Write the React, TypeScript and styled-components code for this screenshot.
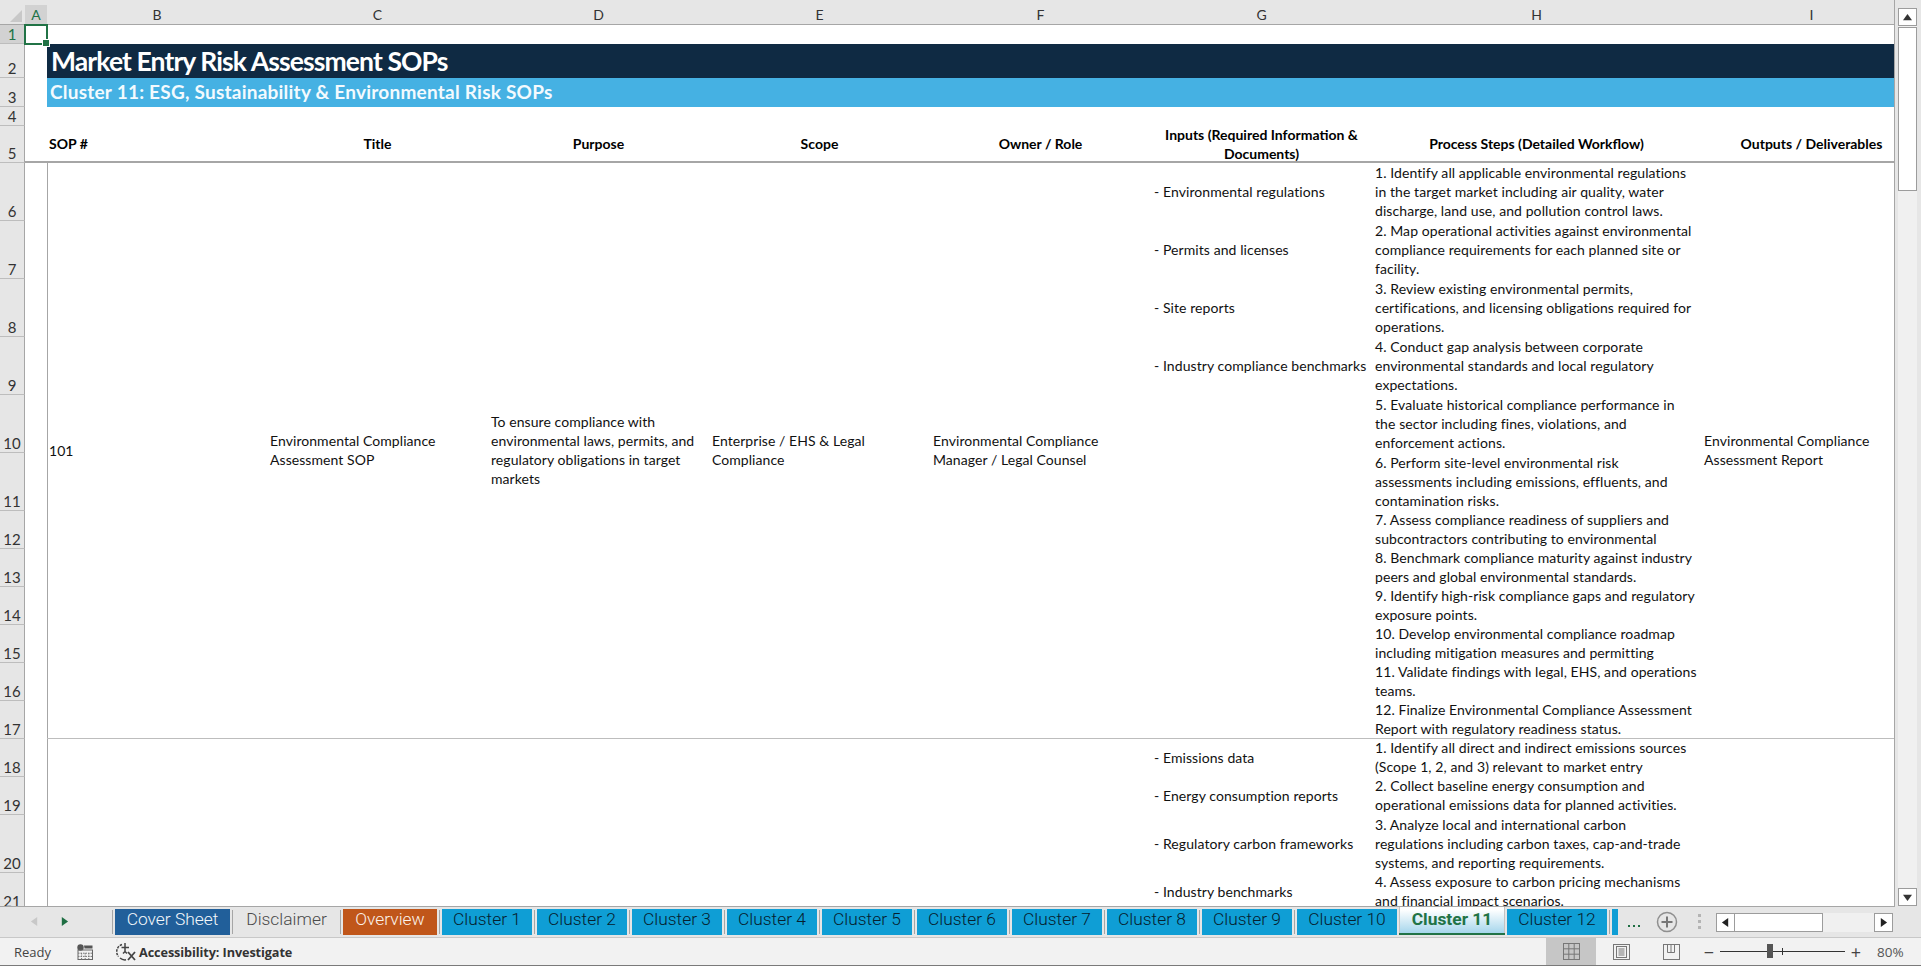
import React from "react";
import styled, { createGlobalStyle } from "styled-components";

const GlobalStyle = createGlobalStyle`
  html, body {
    margin: 0;
    padding: 0;
    background: #e6e6e6;
    overflow: hidden;
  }
  * {
    box-sizing: border-box;
  }
`;

const ROW_HEIGHTS = [25, 19, 34, 29, 19, 37, 58, 58, 58, 58, 58, 58, 38, 38, 38, 38, 38, 38, 38, 38, 58, 38];
const COL_WIDTHS = [25, 22, 220, 221, 221, 221, 221, 221, 329, 221];
const COL_LETTERS = ["A", "B", "C", "D", "E", "F", "G", "H", "I"];

const HEADERS = [
  "Title",
  "Purpose",
  "Scope",
  "Owner / Role",
  "Inputs (Required Information &\nDocuments)",
  "Process Steps (Detailed Workflow)",
  "Outputs / Deliverables",
];

const MERGED = [
  { col: 4, text: "Environmental Compliance\nAssessment SOP" },
  { col: 5, text: "To ensure compliance with\nenvironmental laws, permits, and\nregulatory obligations in target\nmarkets" },
  { col: 6, text: "Enterprise / EHS & Legal\nCompliance" },
  { col: 7, text: "Environmental Compliance\nManager / Legal Counsel" },
  { col: 10, text: "Environmental Compliance\nAssessment Report" },
];

const INPUTS: Record<number, string> = {
  6: "- Environmental regulations",
  7: "- Permits and licenses",
  8: "- Site reports",
  9: "- Industry compliance benchmarks",
  18: "- Emissions data",
  19: "- Energy consumption reports",
  20: "- Regulatory carbon frameworks",
  21: "- Industry benchmarks",
};

const STEPS: Record<number, string> = {
  6: "1. Identify all applicable environmental regulations\nin the target market including air quality, water\ndischarge, land use, and pollution control laws.",
  7: "2. Map operational activities against environmental\ncompliance requirements for each planned site or\nfacility.",
  8: "3. Review existing environmental permits,\ncertifications, and licensing obligations required for\noperations.",
  9: "4. Conduct gap analysis between corporate\nenvironmental standards and local regulatory\nexpectations.",
  10: "5. Evaluate historical compliance performance in\nthe sector including fines, violations, and\nenforcement actions.",
  11: "6. Perform site-level environmental risk\nassessments including emissions, effluents, and\ncontamination risks.",
  12: "7. Assess compliance readiness of suppliers and\nsubcontractors contributing to environmental",
  13: "8. Benchmark compliance maturity against industry\npeers and global environmental standards.",
  14: "9. Identify high-risk compliance gaps and regulatory\nexposure points.",
  15: "10. Develop environmental compliance roadmap\nincluding mitigation measures and permitting",
  16: "11. Validate findings with legal, EHS, and operations\nteams.",
  17: "12. Finalize Environmental Compliance Assessment\nReport with regulatory readiness status.",
  18: "1. Identify all direct and indirect emissions sources\n(Scope 1, 2, and 3) relevant to market entry",
  19: "2. Collect baseline energy consumption and\noperational emissions data for planned activities.",
  20: "3. Analyze local and international carbon\nregulations including carbon taxes, cap-and-trade\nsystems, and reporting requirements.",
  21: "4. Assess exposure to carbon pricing mechanisms\nand financial impact scenarios.",
};

const TABS = [
  { name: "Cover Sheet", width: 115, kind: "cover" },
  { name: "Disclaimer", width: 103, kind: "plain" },
  { name: "Overview", width: 94, kind: "overview" },
  ...[1, 2, 3, 4, 5, 6, 7, 8, 9].map((n) => ({ name: `Cluster ${n}`, width: 90, kind: "cluster" })),
  { name: "Cluster 10", width: 100, kind: "cluster" },
  { name: "Cluster 11", width: 106, kind: "active" },
  { name: "Cluster 12", width: 100, kind: "cluster" },
  { name: "", width: 6, kind: "cluster" },
];

const TAB_COLORS: Record<string, { bg: string; fg: string }> = {
  cover: { bg: "#215f9a", fg: "#f4f8fb" },
  plain: { bg: "transparent", fg: "#4a4a4a" },
  overview: { bg: "#c0561a", fg: "#fbf3ec" },
  cluster: { bg: "#0f9ed5", fg: "#06202e" },
};

const CELL_FONT = `"Lato", "Liberation Sans", sans-serif`;
const UI_FONT = `"Open Sans", "Liberation Sans", sans-serif`;

const Window = styled.div`
  width: 1921px;
  height: 966px;
  display: flex;
  flex-direction: column;
  overflow: hidden;
  background: #e6e6e6;
`;

const SheetRow = styled.div`
  display: flex;
  height: 907px;
`;

const SheetViewport = styled.div`
  width: 1895px;
  height: 907px;
  overflow: hidden;
  background: #fff;
  border-right: 1px solid #a6a6a6;
  border-bottom: 1px solid #a6a6a6;
`;

const Grid = styled.div`
  display: grid;
  width: 1922px;
  grid-template-columns: ${COL_WIDTHS.map((w) => `${w}px`).join(" ")};
  grid-template-rows: ${ROW_HEIGHTS.map((h) => `${h}px`).join(" ")};
  font-family: ${CELL_FONT};
  font-size: 14px;
  line-height: 19px;
  color: #111;
`;

const Corner = styled.div`
  grid-row: 1;
  grid-column: 1;
  background: #e6e6e6;
  border-bottom: 1px solid #a6a6a6;
  display: flex;
  padding: 10px 0 0 10px;
`;

const ColHead = styled.div<{ $col: number }>`
  grid-row: 1;
  grid-column: ${(p) => p.$col};
  background: #e6e6e6;
  border-bottom: 1px solid #a6a6a6;
  display: flex;
  align-items: flex-end;
`;

const ColLabel = styled.div<{ $active?: boolean }>`
  flex: 1;
  height: 19px;
  margin-right: -1px;
  text-align: center;
  line-height: 19px;
  font-size: 14px;
  border-right: 1px solid #b4b4b4;
  background: ${(p) => (p.$active ? "#d2d2d2" : "transparent")};
  color: ${(p) => (p.$active ? "#217346" : "#333")};
`;

const RowHead = styled.div<{ $row: number; $active?: boolean }>`
  grid-row: ${(p) => p.$row};
  grid-column: 1;
  display: flex;
  align-items: flex-end;
  justify-content: center;
  background: ${(p) => (p.$active ? "#d2d2d2" : "#e6e6e6")};
  color: ${(p) => (p.$active ? "#217346" : "#333")};
  border-right: 1px solid #a6a6a6;
  border-bottom: 1px solid #bdbdbd;
  font-size: 15px;
  line-height: 17px;
`;

const Selection = styled.div`
  grid-row: 2;
  grid-column: 2;
  position: relative;
  z-index: 2;
  margin: -1px -1px -1px -1px;
  border: 2px solid #217346;

  &::after {
    content: "";
    position: absolute;
    right: -4px;
    bottom: -4px;
    width: 6px;
    height: 6px;
    background: #217346;
    border: 1px solid #fff;
  }
`;

const TitleBar = styled.div`
  grid-row: 3;
  grid-column: 3 / 11;
  background: #0f2a43;
  color: #fff;
  font-size: 26.5px;
  font-weight: 700;
  line-height: 35px;
  padding-left: 4px;
  white-space: nowrap;
  letter-spacing: -0.9px;
`;

const SubtitleBar = styled.div`
  grid-row: 4;
  grid-column: 3 / 11;
  background: #45b1e3;
  color: #f3fafe;
  font-size: 19px;
  font-weight: 700;
  line-height: 27px;
  padding-left: 3px;
  white-space: nowrap;
  letter-spacing: 0.23px;
`;

const HeaderCell = styled.div<{ $col: number; $left?: boolean }>`
  grid-row: 6;
  grid-column: ${(p) => p.$col};
  display: flex;
  align-items: center;
  justify-content: ${(p) => (p.$left ? "flex-start" : "center")};
  text-align: ${(p) => (p.$left ? "left" : "center")};
  padding: 0 2px;
  font-weight: 700;
  white-space: pre-line;
  color: #000;
  border-bottom: 2px solid #a6a6a6;
`;

const AGutter = styled.div`
  grid-row: 6;
  grid-column: 2;
  border-bottom: 2px solid #a6a6a6;
`;

const MergedCell = styled.div<{ $col: number; $from: number; $to: number }>`
  grid-column: ${(p) => p.$col};
  grid-row: ${(p) => p.$from} / ${(p) => p.$to};
  display: flex;
  align-items: center;
  padding: 0 3px 2px ${(p) => (p.$col === 3 ? 1 : 3)}px;
  white-space: pre-line;
  letter-spacing: 0.06px;
  border-left: ${(p) => (p.$col === 3 ? "1px solid #a6a6a6" : "none")};
`;

const BlockLine = styled.div`
  grid-row: 18;
  grid-column: 3 / 11;
  align-self: end;
  height: 1px;
  background: #bdbdbd;
`;

const RowCell = styled.div<{ $col: number; $row: number }>`
  grid-column: ${(p) => p.$col};
  grid-row: ${(p) => p.$row};
  display: flex;
  align-items: center;
  padding: 0 3px 2px;
  white-space: pre;
  letter-spacing: 0.08px;
`;

const VScroll = styled.div`
  width: 26px;
  height: 906px;
  display: flex;
  flex-direction: column;
  padding: 8px 4px 0 3px;
`;

const ScrollButton = styled.div`
  width: 19px;
  height: 18px;
  background: #fff;
  border: 1px solid #9c9c9c;
  display: flex;
  align-items: center;
  justify-content: center;
`;

const VTrack = styled.div`
  flex: 1;
  width: 19px;
  background: #f0f0f0;
  display: flex;
  flex-direction: column;
`;

const VThumb = styled.div`
  height: 164px;
  margin-top: 1px;
  background: #fff;
  border: 1px solid #9c9c9c;
`;

const TabBar = styled.div`
  height: 31px;
  display: flex;
  align-items: flex-start;
  padding-top: 2px;
  background: #e6e6e6;
  border-bottom: 1px solid #c8c8c8;
`;

const TabNav = styled.div`
  width: 112px;
  height: 24px;
  display: flex;
  align-items: center;
  gap: 21px;
  padding-left: 30px;
`;

const TabStrip = styled.div`
  display: flex;
  align-items: flex-start;
  gap: 2px;
  font-family: "Roboto", "Liberation Sans", sans-serif;
  font-size: 17.4px;
  font-weight: 300;
`;

const TabSep = styled.div`
  width: 1px;
  height: 24px;
  margin-top: 1px;
  background: #a6a6a6;
`;

const Tab = styled.div<{ $width: number; $kind: string }>`
  width: ${(p) => p.$width}px;
  height: 26px;
  line-height: 21px;
  text-align: center;
  white-space: nowrap;
  overflow: hidden;
  background: ${(p) => TAB_COLORS[p.$kind].bg};
  color: ${(p) => TAB_COLORS[p.$kind].fg};
`;

const ActiveTab = styled.div<{ $width: number }>`
  width: ${(p) => p.$width}px;
  height: 28px;
  margin-top: -2px;
  line-height: 25px;
  text-align: center;
  white-space: nowrap;
  font-weight: 700;
  color: #217346;
  background: linear-gradient(#ffffff 10%, #a6d6ec);
  border-bottom: 2px solid #217346;
  box-shadow: inset 1px 0 0 #c4c4c4, inset -1px 0 0 #c4c4c4;
`;

const MoreDots = styled.div`
  margin-left: 10px;
  width: 12px;
  height: 26px;
  display: flex;
  justify-content: space-between;
  align-items: flex-end;
  padding-bottom: 8px;
`;

const GreenDot = styled.span`
  width: 2px;
  height: 2px;
  background: #1f6e43;
`;

const AddSheet = styled.div`
  margin-left: 16px;
  height: 26px;
  display: flex;
  align-items: center;
`;

const SplitGrip = styled.div`
  margin-left: 20px;
  height: 26px;
  width: 4px;
  padding-top: 5px;
  display: flex;
  flex-direction: column;
  gap: 3px;
`;

const GripDot = styled.span`
  width: 3px;
  height: 3px;
  background: #b4b4b4;
`;

const HScroll = styled.div`
  margin-left: 14px;
  margin-top: 4px;
  width: 177px;
  height: 19px;
  display: flex;
`;

const HButton = styled.div`
  width: 19px;
  height: 19px;
  background: #fff;
  border: 1px solid #9c9c9c;
  display: flex;
  align-items: center;
  justify-content: center;
`;

const HThumb = styled.div`
  width: 88px;
  height: 19px;
  background: #fff;
  border: 1px solid #9c9c9c;
  border-left: none;
`;

const HTrack = styled.div`
  flex: 1;
  background: #f0f0f0;
`;

const StatusBar = styled.div`
  height: 28px;
  display: flex;
  align-items: center;
  background: #f2f2f2;
  border-bottom: 1px solid #7a7a7a;
  font-family: ${UI_FONT};
  font-size: 13px;
  color: #444;
`;

const ReadyText = styled.span`
  margin-left: 14px;
  width: 63px;
`;

const IconSlot = styled.span<{ $margin?: number }>`
  display: inline-flex;
  margin-left: ${(p) => p.$margin ?? 0}px;
`;

const AccessText = styled.span`
  margin-left: 3px;
  font-size: 12.7px;
  font-weight: 700;
  color: #333;
  letter-spacing: -0.1px;
`;

const StatusRight = styled.div`
  margin-left: auto;
  display: flex;
  align-items: center;
  height: 100%;
`;

const ViewButton = styled.div<{ $active?: boolean }>`
  width: 50px;
  height: 100%;
  display: flex;
  align-items: center;
  justify-content: center;
  background: ${(p) => (p.$active ? "#c6c6c6" : "transparent")};
`;

const ZoomStrip = styled.div`
  margin-left: 7px;
  display: flex;
  align-items: center;
`;

const ZoomGlyph = styled.span`
  font-size: 18px;
  line-height: 18px;
  color: #444;
  width: 12px;
  text-align: center;
`;

const ZoomSlider = styled.div`
  position: relative;
  width: 125px;
  height: 1px;
  margin: 0 5px;
  background: #333;
`;

const ZoomThumb = styled.span`
  position: absolute;
  left: 47px;
  top: -7px;
  width: 6px;
  height: 14px;
  background: #555;
`;

const ZoomTick = styled.span`
  position: absolute;
  left: 62px;
  top: -3px;
  width: 1px;
  height: 7px;
  background: #333;
`;

const ZoomValue = styled.span`
  margin: 0 17px 0 15px;
  width: 27px;
  white-space: nowrap;
  font-size: 13.5px;
  color: #555;
`;

const Arrow = ({ dir, color, size = 9 }: { dir: "up" | "down" | "left" | "right"; color: string; size?: number }) => {
  const points = {
    up: "0,8 5,1 10,8",
    down: "0,2 10,2 5,9",
    left: "8,0 8,10 1,5",
    right: "2,0 2,10 9,5",
  }[dir];
  return (
    <svg width={size} height={size} viewBox="0 0 10 10">
      <polygon points={points} fill={color} />
    </svg>
  );
};

const MacroIcon = () => (
  <svg width="16" height="16" viewBox="0 0 16 16">
    <circle cx="3.5" cy="3.5" r="3.2" fill="#555" />
    <path d="M7 1.5h8.5v3H7.5z" fill="#555" />
    <rect x="1" y="6" width="14.5" height="9.5" fill="none" stroke="#666" />
    <path d="M1 9.2h14.5M1 12.4h14.5M4.6 9v6.5M8.2 9v6.5M11.8 9v6.5" stroke="#777" strokeWidth="1" strokeDasharray="1.5 1" />
  </svg>
);

const AccessibilityIcon = () => (
  <svg width="20" height="19" viewBox="0 0 20 19" fill="none" stroke="#444" strokeWidth="1.5">
    <path d="M6 2.5A7.5 7.5 0 0 0 2.5 14.5" strokeDasharray="2.5 1" />
    <path d="M4 16a7.5 7.5 0 0 0 6 1.8" />
    <path d="M9 1v8M5.5 5.5h7.5M7 11.5l2-2 2 2" />
    <path d="M12 10l7 8M19 10l-7 8" strokeWidth="1.8" />
  </svg>
);

const NormalViewIcon = () => (
  <svg width="17" height="17" viewBox="0 0 17 17" fill="none" stroke="#777" strokeWidth="1">
    <rect x="0.5" y="0.5" width="16" height="16" />
    <path d="M5.8 0v17M11.2 0v17M0 5.8h17M0 11.2h17" />
  </svg>
);

const PageViewIcon = () => (
  <svg width="17" height="16" viewBox="0 0 17 16" fill="none" stroke="#777" strokeWidth="1">
    <rect x="0.5" y="0.5" width="16" height="15" />
    <rect x="3.5" y="2.5" width="10" height="11" />
    <path d="M5.5 5h6M5.5 7h6M5.5 9h6M5.5 11h6" />
  </svg>
);

const BreakViewIcon = () => (
  <svg width="17" height="16" viewBox="0 0 17 16" fill="none" stroke="#777" strokeWidth="1">
    <rect x="0.5" y="0.5" width="16" height="15" />
    <path d="M4.5 0v8.5h7V0M8 0v8.5" />
  </svg>
);

const AddIcon = () => (
  <svg width="22" height="22" viewBox="0 0 22 22" fill="none" stroke="#8f8f8f">
    <circle cx="11" cy="11" r="9.5" strokeWidth="1.5" />
    <path d="M11 5.5v11M5.5 11h11" strokeWidth="2" stroke="#777" />
  </svg>
);

const Triangle = () => (
  <svg width="12" height="12" viewBox="0 0 12 12">
    <polygon points="12,0 12,12 0,12" fill="#c8c8c8" />
  </svg>
);

const App: React.FC = () => {
  const rowNumbers = ROW_HEIGHTS.slice(1).map((_, i) => i + 1);
  return (
    <>
      <GlobalStyle />
      <Window>
        <SheetRow>
          <SheetViewport>
            <Grid>
              <Corner>
                <Triangle />
              </Corner>
              {COL_LETTERS.map((letter, i) => (
                <ColHead key={letter} $col={i + 2}>
                  <ColLabel $active={letter === "A"}>{letter}</ColLabel>
                </ColHead>
              ))}
              {rowNumbers.map((n) => (
                <RowHead key={n} $row={n + 1} $active={n === 1}>
                  {n}
                </RowHead>
              ))}
              <Selection />
              <TitleBar>Market Entry Risk Assessment SOPs</TitleBar>
              <SubtitleBar>Cluster 11: ESG, Sustainability &amp; Environmental Risk SOPs</SubtitleBar>
              <AGutter />
              <HeaderCell $col={3} $left>
                SOP #
              </HeaderCell>
              {HEADERS.map((text, i) => (
                <HeaderCell key={text} $col={i + 4}>
                  {text}
                </HeaderCell>
              ))}
              <MergedCell $col={3} $from={7} $to={19}>
                101
              </MergedCell>
              <MergedCell $col={3} $from={19} $to={23} />
              {MERGED.map((cell) => (
                <MergedCell key={cell.col} $col={cell.col} $from={7} $to={19}>
                  {cell.text}
                </MergedCell>
              ))}
              {Object.entries(INPUTS).map(([row, text]) => (
                <RowCell key={row} $col={8} $row={Number(row) + 1}>
                  {text}
                </RowCell>
              ))}
              {Object.entries(STEPS).map(([row, text]) => (
                <RowCell key={row} $col={9} $row={Number(row) + 1}>
                  {text}
                </RowCell>
              ))}
              <BlockLine />
            </Grid>
          </SheetViewport>
          <VScroll>
            <ScrollButton>
              <Arrow dir="up" color="#333" />
            </ScrollButton>
            <VTrack>
              <VThumb />
            </VTrack>
            <ScrollButton>
              <Arrow dir="down" color="#333" />
            </ScrollButton>
          </VScroll>
        </SheetRow>
        <TabBar>
          <TabNav>
            <Arrow dir="left" color="#c8c8c8" />
            <Arrow dir="right" color="#1f6e43" />
          </TabNav>
          <TabStrip>
            {TABS.map((tab, i) => {
              const next = TABS[i + 1];
              const besideActive = tab.kind === "active" || next?.kind === "active";
              return (
                <React.Fragment key={tab.name || "partial"}>
                  {i === 0 && <TabSep />}
                  {tab.kind === "active" ? (
                    <ActiveTab $width={tab.width}>{tab.name}</ActiveTab>
                  ) : (
                    <Tab $width={tab.width} $kind={tab.kind}>
                      {tab.name}
                    </Tab>
                  )}
                  {next && !besideActive && <TabSep />}
                </React.Fragment>
              );
            })}
          </TabStrip>
          <MoreDots>
            <GreenDot />
            <GreenDot />
            <GreenDot />
          </MoreDots>
          <AddSheet>
            <AddIcon />
          </AddSheet>
          <SplitGrip>
            <GripDot />
            <GripDot />
            <GripDot />
          </SplitGrip>
          <HScroll>
            <HButton>
              <Arrow dir="left" color="#222" />
            </HButton>
            <HThumb />
            <HTrack />
            <HButton>
              <Arrow dir="right" color="#222" />
            </HButton>
          </HScroll>
        </TabBar>
        <StatusBar>
          <ReadyText>Ready</ReadyText>
          <IconSlot>
            <MacroIcon />
          </IconSlot>
          <IconSlot $margin={23}>
            <AccessibilityIcon />
          </IconSlot>
          <AccessText>Accessibility: Investigate</AccessText>
          <StatusRight>
            <ViewButton $active>
              <NormalViewIcon />
            </ViewButton>
            <ViewButton>
              <PageViewIcon />
            </ViewButton>
            <ViewButton>
              <BreakViewIcon />
            </ViewButton>
            <ZoomStrip>
              <ZoomGlyph>−</ZoomGlyph>
              <ZoomSlider>
                <ZoomThumb />
                <ZoomTick />
              </ZoomSlider>
              <ZoomGlyph>+</ZoomGlyph>
            </ZoomStrip>
            <ZoomValue>80%</ZoomValue>
          </StatusRight>
        </StatusBar>
      </Window>
    </>
  );
};

export default App;
